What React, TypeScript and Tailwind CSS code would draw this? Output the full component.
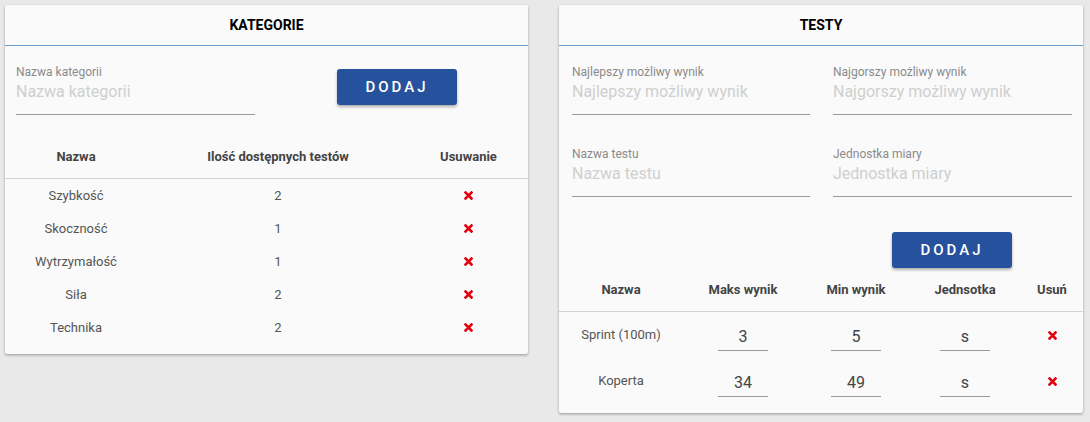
import React from 'react';

// --- Data ---
const categories = [
  { name: 'Szybkość', count: 2 },
  { name: 'Skoczność', count: 1 },
  { name: 'Wytrzymałość', count: 1 },
  { name: 'Siła', count: 2 },
  { name: 'Technika', count: 2 },
];

const tests = [
  { name: 'Sprint (100m)', max: '3', min: '5', unit: 's' },
  { name: 'Koperta', max: '34', min: '49', unit: 's' },
];

// --- Small pieces ---
const RemoveIcon = () => (
  <svg width="9" height="9" viewBox="0 0 9 9" className="inline-block">
    <path d="M1.5 1.5 L7.5 7.5 M7.5 1.5 L1.5 7.5" stroke="#e3000f" strokeWidth="2.6" strokeLinecap="square" />
  </svg>
);

const Card = ({ title, className, children }: { title: string; className?: string; children: React.ReactNode }) => (
  <div className={`bg-[#fafafa] rounded-[2px] shadow-[0_1px_3px_rgba(0,0,0,0.25),0_2px_2px_rgba(0,0,0,0.08)] ${className ?? ''}`}>
    <div className="h-[41px] flex items-center justify-center border-b border-[#6a9bd0] text-[14px] font-bold text-black">
      {title}
    </div>
    {children}
  </div>
);

const TextField = ({ label, className }: { label: string; className?: string }) => (
  <div className={`border-b border-[#9a9a9a] pb-[12px] ${className ?? ''}`}>
    <div className="text-[12px] leading-[14px] text-[#8a8a8a]">{label}</div>
    <div className="mt-[3px] text-[16px] leading-[20px] text-[#cfcfcf]">{label}</div>
  </div>
);

const AddButton = ({ className }: { className?: string }) => (
  <button className={`w-[120px] h-[36px] rounded-[3px] bg-[#26519c] text-white text-[15px] font-medium tracking-[0.2em] shadow-[0_2px_3px_rgba(0,0,0,0.3)] ${className ?? ''}`}>
    DODAJ
  </button>
);

const App: React.FC = () => {
  return (
    <div className="w-[1090px] h-[422px] bg-[#e9e9e9] pl-[5px] pt-[5px] flex items-start gap-[31px] font-['Roboto',sans-serif]">
      {/* Kategorie */}
      <Card title="KATEGORIE" className="w-[523px] pb-[10px]">
        <div className="flex items-start px-[11px] pt-[19px]">
          <TextField label="Nazwa kategorii" className="w-[239px]" />
          <AddButton className="ml-[82px] mt-[4px]" />
        </div>

        <div className="mt-[21px]">
          <div className="flex h-[43px] items-center border-b border-[#d4d4d4] text-[13px] font-bold text-[#444]">
            <div className="w-[142px] text-center">Nazwa</div>
            <div className="w-[262px] text-center">Ilość dostępnych testów</div>
            <div className="w-[119px] text-center">Usuwanie</div>
          </div>
          {categories.map((c) => (
            <div key={c.name} className="flex h-[33px] items-center text-[13px] text-[#555]">
              <div className="w-[142px] text-center">{c.name}</div>
              <div className="w-[262px] text-center">{c.count}</div>
              <div className="w-[119px] flex justify-center"><RemoveIcon /></div>
            </div>
          ))}
        </div>
      </Card>

      {/* Testy */}
      <Card title="TESTY" className="w-[524px] pb-[9px]">
        <div className="grid grid-cols-[238px_239px] gap-x-[23px] gap-y-[32px] px-[13px] pt-[19px]">
          <TextField label="Najlepszy możliwy wynik" />
          <TextField label="Najgorszy możliwy wynik" />
          <TextField label="Nazwa testu" />
          <TextField label="Jednostka miary" />
        </div>

        <AddButton className="ml-[333px] mt-[35px]" />

        <div>
          <div className="flex h-[44px] items-center border-b border-[#d4d4d4] text-[13px] font-bold text-[#444]">
            <div className="w-[124px] text-center">Nazwa</div>
            <div className="w-[120px] text-center">Maks wynik</div>
            <div className="w-[106px] text-center">Min wynik</div>
            <div className="w-[112px] text-center">Jednsotka</div>
            <div className="w-[62px] text-center">Usuń</div>
          </div>
          {tests.map((t) => (
            <div key={t.name} className="flex h-[46px] items-center text-[13px] text-[#555]">
              <div className="w-[124px] text-center">{t.name}</div>
              {[t.max, t.min, t.unit].map((v, i) => (
                <div key={i} className={`${i === 0 ? 'w-[120px]' : i === 1 ? 'w-[106px]' : 'w-[112px]'} flex justify-center`}>
                  <div className="w-[50px] mt-[7px] border-b border-[#9a9a9a] pb-[3px] text-center text-[16px] leading-[20px] text-[#444]">
                    {v}
                  </div>
                </div>
              ))}
              <div className="w-[62px] flex justify-center"><RemoveIcon /></div>
            </div>
          ))}
        </div>
      </Card>
    </div>
  );
};

export default App;
